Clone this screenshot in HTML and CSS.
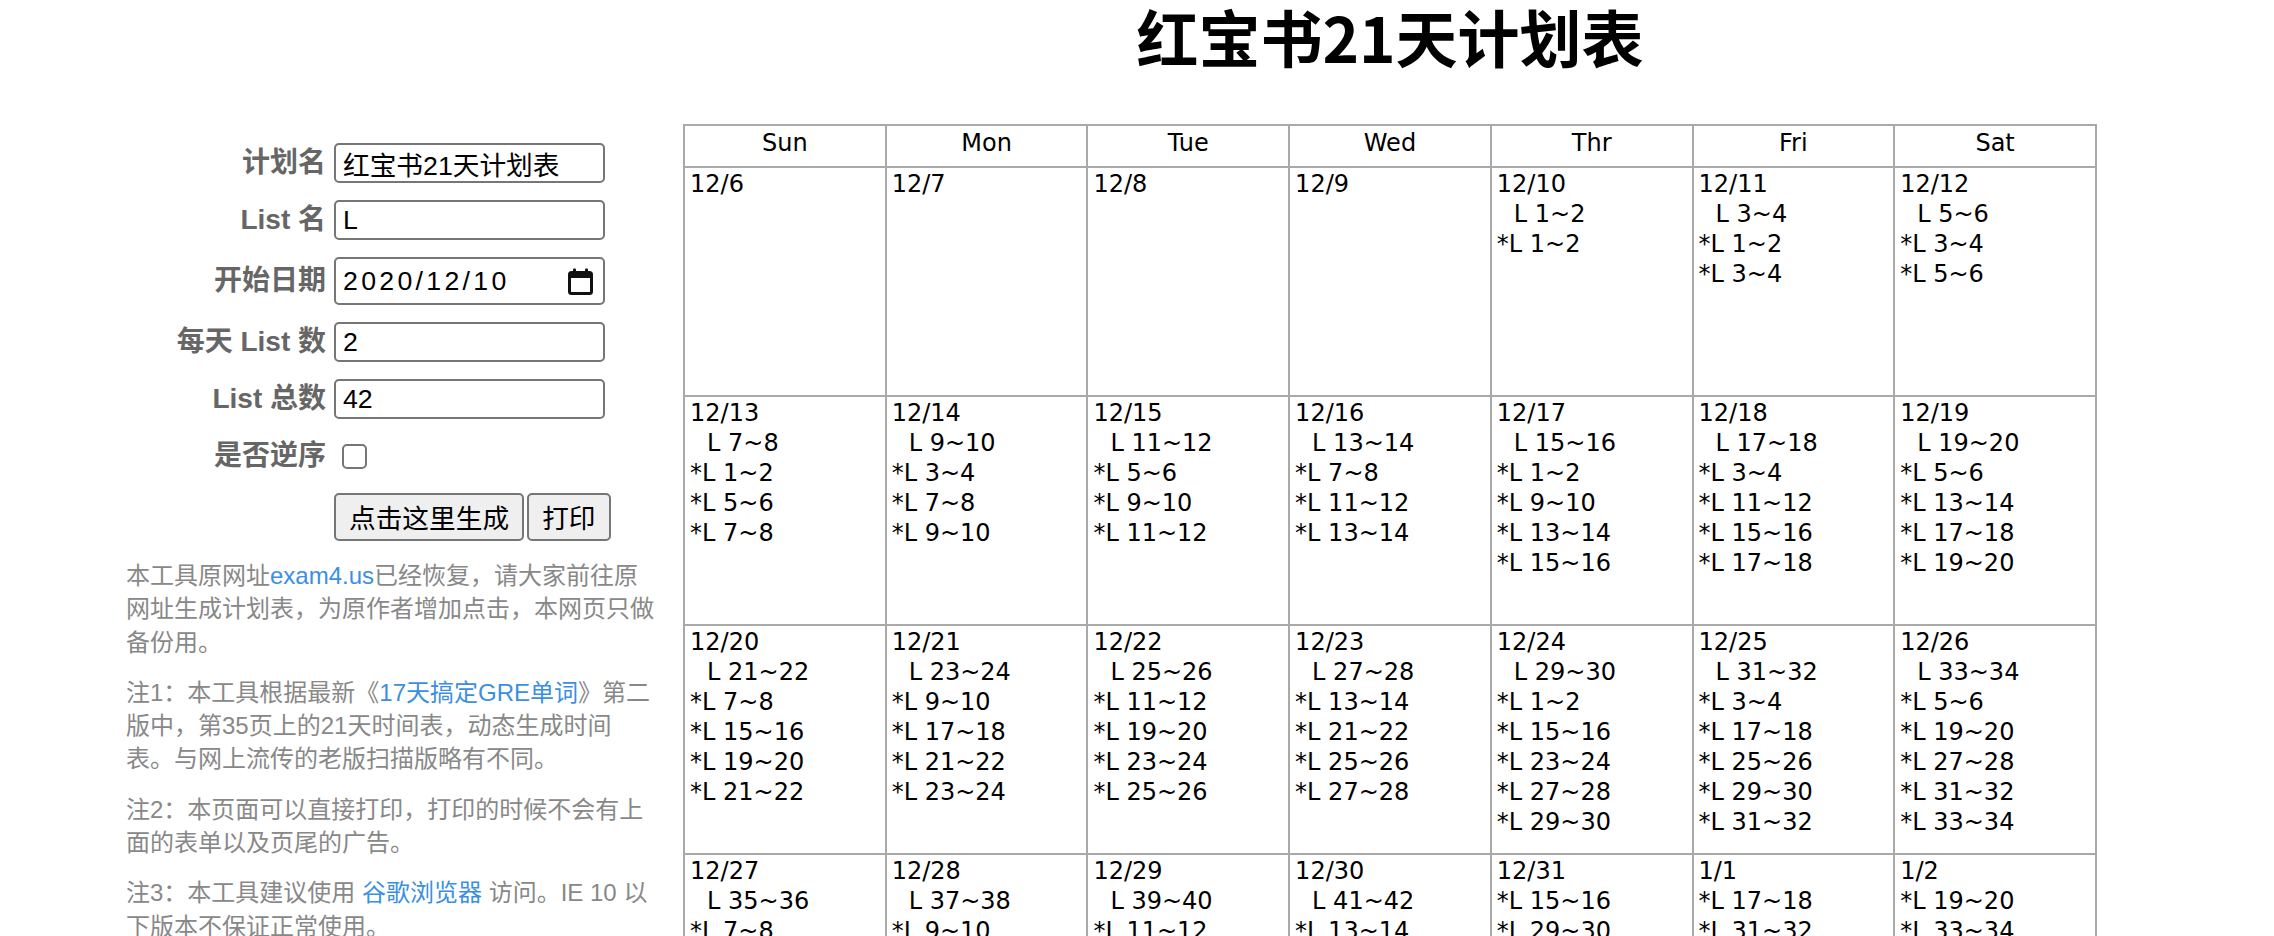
FILE: index.html
```html
<!DOCTYPE html>
<html lang="zh-CN">
<head>
<meta charset="utf-8">
<title>红宝书21天计划表</title>
<link rel="stylesheet" href="styles.css">
</head>
<body>
<div class="page">
  <aside class="sidebar">
    <form class="plan-form">
      <label class="field-label" for="plan-name">计划名</label>
      <input class="field" id="plan-name" type="text" value="红宝书21天计划表">

      <label class="field-label" for="list-name">List 名</label>
      <input class="field" id="list-name" type="text" value="L">

      <label class="field-label" for="start-date">开始日期</label>
      <div class="field date-field">
        <input class="date-text" id="start-date" type="text" value="2020/12/10">
        <svg class="date-icon" width="25" height="27" viewBox="0 0 25 27" aria-hidden="true">
          <rect x="1.5" y="4.5" width="22" height="21" rx="2" fill="none" stroke="#111" stroke-width="3"/>
          <rect x="1.5" y="4.5" width="22" height="5.5" fill="#111"/>
          <rect x="5" y="0.5" width="3" height="5" rx="1" fill="#111"/>
          <rect x="17" y="0.5" width="3" height="5" rx="1" fill="#111"/>
        </svg>
      </div>

      <label class="field-label" for="per-day">每天 List 数</label>
      <input class="field" id="per-day" type="text" value="2">

      <label class="field-label" for="total">List 总数</label>
      <input class="field" id="total" type="text" value="42">

      <label class="field-label" for="reverse">是否逆序</label>
      <div class="check-cell"><input class="checkbox" id="reverse" type="checkbox"></div>

      <div class="spacer"></div>
      <div class="buttons">
        <button type="button" class="btn">点击这里生成</button><button type="button" class="btn">打印</button>
      </div>
    </form>

    <div class="notes">
      <p>本工具原网址<a href="#">exam4.us</a>已经恢复，请大家前往原网址生成计划表，为原作者增加点击，本网页只做备份用。</p>
      <p>注1：本工具根据最新《<a href="#">17天搞定GRE单词</a>》第二版中，第35页上的21天时间表，动态生成时间表。与网上流传的老版扫描版略有不同。</p>
      <p>注2：本页面可以直接打印，打印的时候不会有上面的表单以及页尾的广告。</p>
      <p>注3：本工具建议使用 <a href="#">谷歌浏览器</a> 访问。IE 10 以下版本不保证正常使用。</p>
    </div>
  </aside>

  <main class="main">
    <h1 class="title">红宝书21天计划表</h1>
    <table class="calendar">
      <thead>
        <tr><th>Sun</th><th>Mon</th><th>Tue</th><th>Wed</th><th>Thr</th><th>Fri</th><th>Sat</th></tr>
      </thead>
      <tbody>
        <tr class="week">
          <td><div>12/6</div></td>
          <td><div>12/7</div></td>
          <td><div>12/8</div></td>
          <td><div>12/9</div></td>
          <td><div>12/10</div><div class="new">L 1~2</div><div>*L 1~2</div></td>
          <td><div>12/11</div><div class="new">L 3~4</div><div>*L 1~2</div><div>*L 3~4</div></td>
          <td><div>12/12</div><div class="new">L 5~6</div><div>*L 3~4</div><div>*L 5~6</div></td>
        </tr>
        <tr class="week">
          <td><div>12/13</div><div class="new">L 7~8</div><div>*L 1~2</div><div>*L 5~6</div><div>*L 7~8</div></td>
          <td><div>12/14</div><div class="new">L 9~10</div><div>*L 3~4</div><div>*L 7~8</div><div>*L 9~10</div></td>
          <td><div>12/15</div><div class="new">L 11~12</div><div>*L 5~6</div><div>*L 9~10</div><div>*L 11~12</div></td>
          <td><div>12/16</div><div class="new">L 13~14</div><div>*L 7~8</div><div>*L 11~12</div><div>*L 13~14</div></td>
          <td><div>12/17</div><div class="new">L 15~16</div><div>*L 1~2</div><div>*L 9~10</div><div>*L 13~14</div><div>*L 15~16</div></td>
          <td><div>12/18</div><div class="new">L 17~18</div><div>*L 3~4</div><div>*L 11~12</div><div>*L 15~16</div><div>*L 17~18</div></td>
          <td><div>12/19</div><div class="new">L 19~20</div><div>*L 5~6</div><div>*L 13~14</div><div>*L 17~18</div><div>*L 19~20</div></td>
        </tr>
        <tr class="week">
          <td><div>12/20</div><div class="new">L 21~22</div><div>*L 7~8</div><div>*L 15~16</div><div>*L 19~20</div><div>*L 21~22</div></td>
          <td><div>12/21</div><div class="new">L 23~24</div><div>*L 9~10</div><div>*L 17~18</div><div>*L 21~22</div><div>*L 23~24</div></td>
          <td><div>12/22</div><div class="new">L 25~26</div><div>*L 11~12</div><div>*L 19~20</div><div>*L 23~24</div><div>*L 25~26</div></td>
          <td><div>12/23</div><div class="new">L 27~28</div><div>*L 13~14</div><div>*L 21~22</div><div>*L 25~26</div><div>*L 27~28</div></td>
          <td><div>12/24</div><div class="new">L 29~30</div><div>*L 1~2</div><div>*L 15~16</div><div>*L 23~24</div><div>*L 27~28</div><div>*L 29~30</div></td>
          <td><div>12/25</div><div class="new">L 31~32</div><div>*L 3~4</div><div>*L 17~18</div><div>*L 25~26</div><div>*L 29~30</div><div>*L 31~32</div></td>
          <td><div>12/26</div><div class="new">L 33~34</div><div>*L 5~6</div><div>*L 19~20</div><div>*L 27~28</div><div>*L 31~32</div><div>*L 33~34</div></td>
        </tr>
        <tr class="week">
          <td><div>12/27</div><div class="new">L 35~36</div><div>*L 7~8</div><div>*L 21~22</div><div>*L 29~30</div><div>*L 33~34</div><div>*L 35~36</div></td>
          <td><div>12/28</div><div class="new">L 37~38</div><div>*L 9~10</div><div>*L 23~24</div><div>*L 31~32</div><div>*L 35~36</div><div>*L 37~38</div></td>
          <td><div>12/29</div><div class="new">L 39~40</div><div>*L 11~12</div><div>*L 25~26</div><div>*L 33~34</div><div>*L 37~38</div><div>*L 39~40</div></td>
          <td><div>12/30</div><div class="new">L 41~42</div><div>*L 13~14</div><div>*L 27~28</div><div>*L 35~36</div><div>*L 39~40</div><div>*L 41~42</div></td>
          <td><div>12/31</div><div>*L 15~16</div><div>*L 29~30</div><div>*L 37~38</div><div>*L 41~42</div></td>
          <td><div>1/1</div><div>*L 17~18</div><div>*L 31~32</div><div>*L 39~40</div></td>
          <td><div>1/2</div><div>*L 19~20</div><div>*L 33~34</div><div>*L 41~42</div></td>
        </tr>
      </tbody>
    </table>
  </main>
</div>
</body>
</html>
```

FILE: styles.css
```css
html, body {
  margin: 0;
  padding: 0;
  background: #fff;
}

body {
  font-family: "Liberation Sans", "Noto Sans CJK SC", sans-serif;
  color: #000;
}

.page {
  display: flex;
  align-items: flex-start;
}

/* ---------- sidebar ---------- */
.sidebar {
  flex: 0 0 683px;
  width: 683px;
  padding-top: 143px;
  box-sizing: border-box;
}

.plan-form {
  display: grid;
  grid-template-columns: 326px 271px;
  column-gap: 8px;
  row-gap: 17px;
  align-items: center;
}

.field-label {
  justify-self: end;
  font-size: 28px;
  font-weight: bold;
  color: #666;
  line-height: 40px;
  white-space: nowrap;
}

.field {
  box-sizing: border-box;
  width: 271px;
  height: 40px;
  margin: 0;
  padding: 0 7px;
  border: 2px solid #767676;
  border-radius: 5px;
  background: #fff;
  font-family: "Liberation Sans", "Noto Sans CJK SC", sans-serif;
  font-size: 26.7px;
  color: #000;
  outline: none;
}

.date-field {
  height: 48px;
  display: flex;
  align-items: center;
  justify-content: space-between;
  padding: 0 10px 0 7px;
}

.date-text {
  border: 0;
  padding: 0;
  margin: 0;
  width: 200px;
  font-family: "Liberation Sans", sans-serif;
  font-size: 26.7px;
  letter-spacing: 3.3px;
  color: #000;
  background: transparent;
  outline: none;
}

.date-icon {
  flex: none;
  display: block;
  margin-top: 1px;
}

.check-cell {
  height: 40px;
  display: flex;
  align-items: center;
}

.checkbox {
  appearance: none;
  -webkit-appearance: none;
  box-sizing: border-box;
  width: 25px;
  height: 25px;
  margin: 0 0 0 8px;
  border: 2px solid #767676;
  border-radius: 5px;
  background: #fff;
}

.buttons {
  display: flex;
  gap: 3px;
  grid-column: 2;
  width: max-content;
}

.btn {
  flex: none;
  box-sizing: border-box;
  height: 48px;
  margin: 0;
  padding: 0 13px;
  border: 2px solid #767676;
  border-radius: 5px;
  background: #efefef;
  font-family: "Noto Sans CJK SC", sans-serif;
  font-size: 26.7px;
  line-height: 1;
  white-space: nowrap;
  color: #000;
}

.notes {
  margin: 18px 0 0 126px;
  width: 530px;
  font-size: 24px;
  line-height: 33.3px;
  color: #888;
}

.notes p {
  margin: 0 0 17px;
}

.notes a {
  color: #3b8fe3;
  text-decoration: none;
}

/* ---------- main ---------- */
.main {
  flex: 0 0 1414px;
  width: 1414px;
}

.title {
  margin: 0 0 52px;
  font-family: "Noto Sans CJK SC", sans-serif;
  font-size: 62px;
  font-weight: bold;
  line-height: 72px;
  text-align: center;
  color: #000;
}

.calendar {
  width: 1414px;
  table-layout: fixed;
  border-collapse: collapse;
  border: 2px solid #a9a9a9;
  font-family: "DejaVu Sans", "Verdana", sans-serif;
  font-size: 24px;
  line-height: 30px;
}

.calendar th,
.calendar td {
  border: 2px solid #a9a9a9;
}

.calendar th {
  font-weight: normal;
  padding: 2px 4px 8px;
  text-align: center;
}

.calendar td {
  height: 229px;
  padding: 1px 4px 0 5px;
  vertical-align: top;
  box-sizing: border-box;
}

.calendar .new {
  padding-left: 17px;
}
```
